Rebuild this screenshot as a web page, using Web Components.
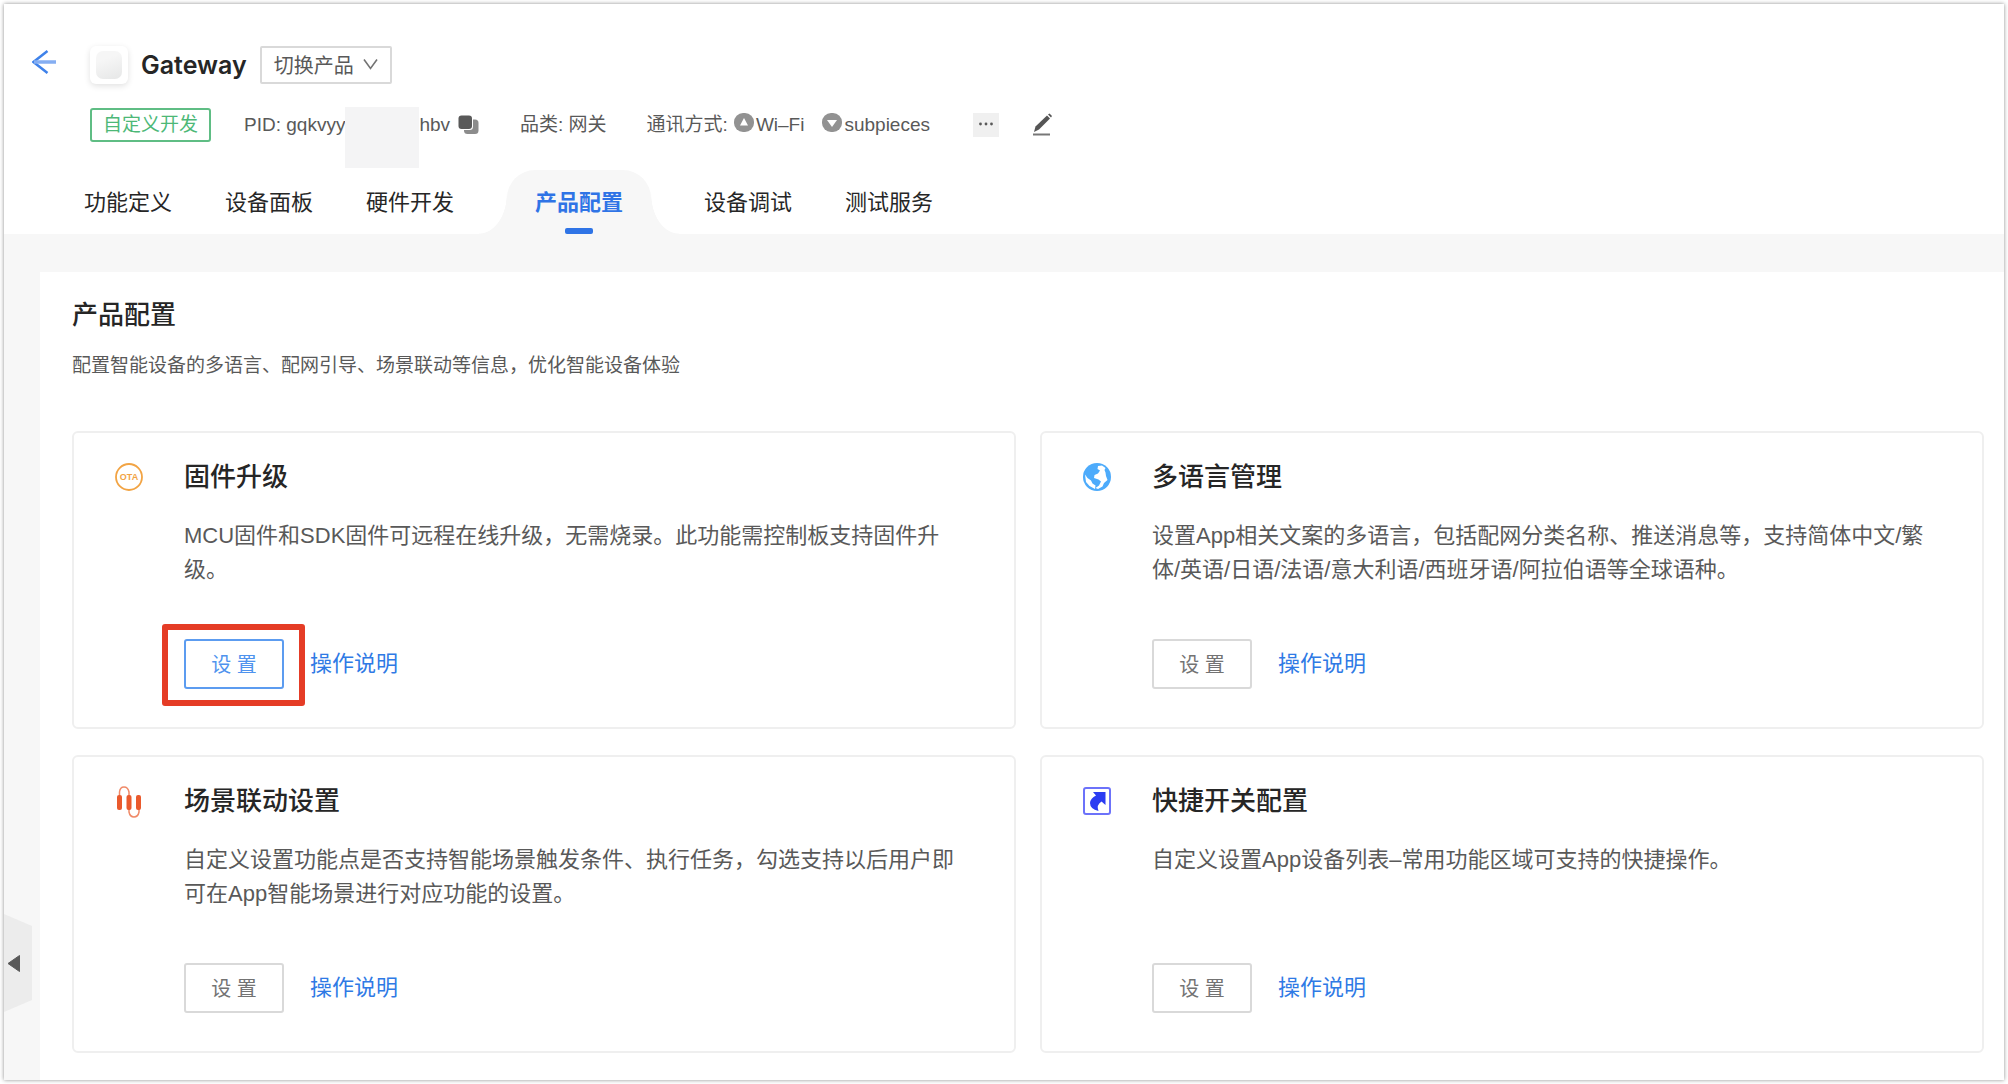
<!DOCTYPE html>
<html lang="zh-CN">
<head>
<meta charset="utf-8">
<title>Gateway - 产品配置</title>
<style>
  body {
    margin: 0;
    background: #fff;
    color: #262626;
    font-family: "Liberation Sans", "Noto Sans CJK SC", sans-serif;
  }
</style>
</head>
<body>
<product-console>
  <product-header slot="header" name="Gateway"></product-header>
  <config-panel heading="产品配置" summary="配置智能设备的多语言、配网引导、场景联动等信息，优化智能设备体验">
    <config-card heading="固件升级" icon="ota" active>MCU固件和SDK固件可远程在线升级，无需烧录。此功能需控制板支持固件升级。</config-card>
    <config-card heading="多语言管理" icon="globe">设置App相关文案的多语言，包括配网分类名称、推送消息等，支持简体中文/繁体/英语/日语/法语/意大利语/西班牙语/阿拉伯语等全球语种。</config-card>
    <config-card heading="场景联动设置" icon="scene">自定义设置功能点是否支持智能场景触发条件、执行任务，勾选支持以后用户即可在App智能场景进行对应功能的设置。</config-card>
    <config-card heading="快捷开关配置" icon="shortcut">自定义设置App设备列表–常用功能区域可支持的快捷操作。</config-card>
  </config-panel>
</product-console>

<script>
// product-console - page shell with the collapsed side menu handle
class ProductConsole extends HTMLElement {
  constructor() {
    super();
    this.attachShadow({ mode: 'open' });
  }

  connectedCallback() {
    this.shadowRoot.innerHTML = `
      <style>
        :host {
          display: flex;
          box-sizing: border-box;
          min-height: 100vh;
          padding: 4px;
        }

        .frame {
          position: relative;
          flex: 1;
          display: flex;
          flex-direction: column;
          background: #f7f7f7;
          box-shadow: 0 0 4px rgba(0, 0, 0, 0.45);
        }

        main {
          flex: 1;
          display: flex;
          padding: 38px 0 0 36px;
        }

        .handle {
          position: absolute;
          left: 0;
          bottom: 68px;
          width: 28px;
          height: 98px;
          padding: 0;
          border: 0;
          background: none;
          cursor: pointer;
        }

        .handle svg {
          display: block;
        }
      </style>

      <div class="frame">
        <slot name="header"></slot>
        <main><slot></slot></main>
        <button class="handle" aria-label="展开菜单">
          <svg width="28" height="98" viewBox="0 0 28 98">
            <path d="M0 0L28 12V86L0 98z" fill="#ececec"/>
            <path d="M4 49.500L15.500 41.500V57.500z" fill="#595959" stroke="#595959" stroke-linejoin="round"/>
          </svg>
        </button>
      </div>
    `;
  }
}

// product-header - product name, meta line and tabs
class ProductHeader extends HTMLElement {
  constructor() {
    super();
    this.attachShadow({ mode: 'open' });
  }

  connectedCallback() {
    this.shadowRoot.innerHTML = `
      <style>
        :host {
          display: block;
          padding-top: 42px;
          background: #fff;
        }

        button {
          padding: 0;
          border: 0;
          background: none;
          font-family: inherit;
          cursor: pointer;
        }

        svg {
          display: block;
        }

        .top {
          display: flex;
          gap: 34px;
          padding-left: 28px;
        }

        .back {
          align-self: flex-start;
          height: 32px;
        }

        .title-row {
          display: flex;
          align-items: center;
          height: 38px;
        }

        .logo {
          display: flex;
          align-items: center;
          justify-content: center;
          width: 38px;
          height: 38px;
          border-radius: 6px;
          background: #fff;
          box-shadow: 0 2px 6px rgba(0, 0, 0, 0.12);
        }

        .logo span {
          width: 26px;
          height: 28px;
          border-radius: 7px;
          background: linear-gradient(160deg, #f6f6f6 30%, #e6e7e7);
        }

        h1 {
          margin: 0 13px;
          font-family: Inter, "Liberation Sans", sans-serif;
          font-size: 25px;
          font-weight: 600;
          line-height: 38px;
        }

        .switch {
          display: flex;
          align-items: center;
          gap: 9px;
          height: 38px;
          padding: 0 12px 2px;
          border: 2px solid #d9d9d9;
          border-radius: 2px;
          color: #595959;
          font-size: 20px;
        }

        .meta {
          display: flex;
          align-items: center;
          height: 34px;
          margin-top: 24px;
          color: #595959;
          font-size: 19px;
          line-height: 28px;
          white-space: nowrap;
        }

        .tag {
          box-sizing: border-box;
          height: 34px;
          margin-right: 33px;
          padding: 0 11px;
          border: 2px solid #5fbd84;
          border-radius: 3px;
          color: #4db877;
          line-height: 30px;
        }

        .pid,
        .link {
          display: flex;
          align-items: center;
        }

        .mask {
          width: 74px;
          height: 61px;
          margin: -2px 0 -27px;
          background: #f4f4f5;
        }

        .copy {
          margin-left: 8px;
        }

        .kind,
        .link {
          margin-left: 40px;
        }

        .link svg {
          margin: 0 2px 4px 6px;
        }

        .link svg + span + svg {
          margin-left: 18px;
        }

        .more {
          width: 26px;
          height: 24px;
          margin: 0 34px 0 43px;
          background: #f0f0f0;
        }

        nav {
          display: flex;
          gap: 53px;
          margin-top: 28px;
          padding-left: 80px;
        }

        nav a {
          position: relative;
          height: 64px;
          color: #262626;
          font-size: 22px;
          line-height: 66px;
          text-decoration: none;
        }

        nav a.current {
          display: flex;
          flex-direction: column;
          align-items: center;
          padding: 0 28px;
          border-radius: 28px 28px 0 0;
          background: #f7f7f7;
          color: #2f74e6;
          font-weight: 700;
        }

        nav a.current i {
          width: 28px;
          height: 6px;
          margin-top: -8px;
          border-radius: 2px;
          background: #2f74e6;
        }

        /* concave feet that join the tab to the grey page */
        nav a.current::before,
        nav a.current::after {
          content: "";
          position: absolute;
          bottom: 0;
          width: 28px;
          height: 40px;
        }

        nav a.current::before {
          right: 100%;
          background: radial-gradient(ellipse 28px 40px at 0 0, transparent 98%, #f7f7f7 100%);
        }

        nav a.current::after {
          left: 100%;
          background: radial-gradient(ellipse 28px 40px at 100% 0, transparent 98%, #f7f7f7 100%);
        }
      </style>

      <div class="top">
        <button class="back" aria-label="返回">
          <svg width="24" height="24" viewBox="0 0 24 24" fill="none" stroke="#3f82ea" stroke-width="2.500">
            <path d="M15.500 1L1.500 12L15.500 23"/>
            <path d="M2 12H24" stroke="#85aef2" stroke-width="3.500"/>
          </svg>
        </button>
        <div>
          <div class="title-row">
            <div class="logo"><span></span></div>
            <h1>${this.getAttribute('name')}</h1>
            <button class="switch">
              <span>切换产品</span>
              <svg width="15" height="12" viewBox="0 0 15 12" fill="none" stroke="#737373" stroke-width="1.600"><path d="M1 1.500L7.500 10.500L14 1.500"/></svg>
            </button>
          </div>
          <div class="meta">
            <span class="tag">自定义开发</span>
            <div class="pid">
              <span>PID: gqkvyy</span><span class="mask"></span><span>hbv</span>
              <button class="copy" aria-label="复制">
                <svg width="22" height="20" viewBox="0 0 22 20">
                  <rect x="6" y="4.500" width="14.500" height="14.500" rx="3.500" fill="#8c8c8c"/>
                  <rect x="0" y="0" width="15" height="15" rx="3.500" fill="#fff"/>
                  <rect x="0.500" y="0.500" width="13.500" height="13.500" rx="3" fill="#595959"/>
                </svg>
              </button>
            </div>
            <span class="kind">品类: 网关</span>
            <div class="link">
              <span>通讯方式:</span>
              <svg width="20" height="20" viewBox="0 0 20 20"><rect width="20" height="19" rx="9" fill="#929292"/><path d="M10 5L14 12.500H6z" fill="#fff"/></svg>
              <span>Wi–Fi</span>
              <svg width="20" height="20" viewBox="0 0 20 20"><rect width="20" height="19" rx="9" fill="#929292"/><path d="M5 7H15L10 14z" fill="#fff"/></svg>
              <span>subpieces</span>
            </div>
            <button class="more" aria-label="更多">
              <svg width="26" height="24" viewBox="0 0 26 24" fill="#595959"><circle cx="7.500" cy="11" r="1.400"/><circle cx="13" cy="11" r="1.400"/><circle cx="18.500" cy="11" r="1.400"/></svg>
            </button>
            <button aria-label="编辑">
              <svg width="20" height="24" viewBox="0 0 20 24">
                <path d="M0 21.500H17" stroke="#777" stroke-width="2"/>
                <path d="M1 19L2.500 13.500L14 2.500L17 5.500L6 16.500z" fill="#555"/>
                <path d="M15 1.500L16.500 0.500L19 3L18 4.500z" fill="#555"/>
              </svg>
            </button>
          </div>
        </div>
      </div>
      <nav>
        <a href="#function">功能定义</a>
        <a href="#panel">设备面板</a>
        <a href="#hardware">硬件开发</a>
        <a href="#config" class="current">产品配置<i></i></a>
        <a href="#debug">设备调试</a>
        <a href="#test">测试服务</a>
      </nav>
    `;
  }
}

// config-panel - heading and a two column grid of cards
class ConfigPanel extends HTMLElement {
  constructor() {
    super();
    this.attachShadow({ mode: 'open' });
  }

  connectedCallback() {
    this.shadowRoot.innerHTML = `
      <style>
        :host {
          flex: 1;
          display: block;
          padding: 25px 20px 26px 32px;
          background: #fff;
        }

        h2 {
          margin: 0;
          font-size: 26px;
          font-weight: 500;
          line-height: 36px;
        }

        p {
          margin: 19px 0 51px;
          color: #595959;
          font-size: 19px;
          line-height: 28px;
        }

        .grid {
          display: grid;
          grid-template-columns: 1fr 1fr;
          gap: 26px 24px;
        }
      </style>

      <h2>${this.getAttribute('heading')}</h2>
      <p>${this.getAttribute('summary')}</p>
      <div class="grid"><slot></slot></div>
    `;
  }
}

const ICONS = {
  ota: `
    <circle cx="14" cy="14" r="13" fill="none" stroke="#f2a444" stroke-width="1.800"/>
    <text x="14" y="17" text-anchor="middle" font-size="9" font-weight="700" fill="#f2a444">OTA</text>`,
  globe: `
    <circle cx="14" cy="14" r="14" fill="#4dabfb"/>
    <path fill="#fff" d="M15 3L19 2.500L22.500 5L21.500 7L22.500 9.500L23 13L24.500 17L21 20L19.500 23.500L15 26L12.500 25L16 22.500L18 18.500L15.500 16.500L11 15L11.500 12L15 10.500L17 7.500L14.500 6z"/>
    <path fill="#fff" d="M2 11.500L4.500 15L8 17.500L9.500 20.500L12.500 22.500L12 26L6.500 23L3 19z"/>`,
  scene: `
    <g fill="none" stroke="#f08a68" stroke-width="1.500">
      <path d="M4.500 8V5Q5 0 9 0T14 5V8"/>
      <path d="M14 22V25Q15 30 19 30T24 25V22"/>
    </g>
    <g fill="#ea5a2d">
      <rect x="2" y="8" width="5" height="15" rx="2"/>
      <rect x="11.500" y="8" width="5" height="15" rx="2"/>
      <rect x="21" y="8" width="5" height="15" rx="2"/>
    </g>`,
  shortcut: `
    <rect x="1" y="1" width="26" height="26" rx="2" fill="#fff" stroke="#6c72fa" stroke-width="2"/>
    <path fill="#2b3cf2" d="M10 5H22.500V18L18.500 14.500Q13 18 15.500 24Q7 22 7 16Q7.500 11 13 8.500z"/>`
};

// config-card - one feature with its settings button and help link
class ConfigCard extends HTMLElement {
  constructor() {
    super();
    this.attachShadow({ mode: 'open' });
  }

  connectedCallback() {
    this.shadowRoot.innerHTML = `
      <style>
        :host {
          display: grid;
          grid-template-columns: 28px 1fr;
          column-gap: 41px;
          padding: 30px 48px 38px 41px;
          border: 2px solid #efefef;
          border-radius: 6px;
        }

        svg {
          display: block;
          overflow: visible;
        }

        h3 {
          margin: 0;
          font-size: 26px;
          font-weight: 500;
          line-height: 28px;
        }

        p {
          min-height: 68px;
          margin: 28px 0 52px;
          color: #595959;
          font-size: 22px;
          line-height: 34px;
        }

        .actions {
          display: flex;
          align-items: center;
          gap: 26px;
        }

        .set {
          position: relative;
        }

        button {
          display: block;
          width: 100px;
          height: 50px;
          padding: 0 0 2px;
          border: 2px solid #d9d9d9;
          border-radius: 3px;
          background: #fff;
          color: #737373;
          font-family: inherit;
          font-size: 20px;
          cursor: pointer;
        }

        :host([active]) button {
          border-color: #5c9cf0;
          color: #4f93ee;
        }

        /* callout drawn round the highlighted button */
        :host([active]) .set::after {
          content: "";
          position: absolute;
          inset: -15px -21px -17px -22px;
          border: 6px solid #e53c26;
          border-radius: 3px;
          pointer-events: none;
        }

        a {
          color: #2f7ae5;
          font-size: 22px;
          line-height: 34px;
          text-decoration: none;
        }
      </style>

      <svg width="28" height="28" viewBox="0 0 28 28" aria-hidden="true">${ICONS[this.getAttribute('icon')]}</svg>
      <div>
        <h3>${this.getAttribute('heading')}</h3>
        <p><slot></slot></p>
        <div class="actions">
          <div class="set"><button>设 置</button></div>
          <a href="#help">操作说明</a>
        </div>
      </div>
    `;
  }
}

customElements.define('product-console', ProductConsole);
customElements.define('product-header', ProductHeader);
customElements.define('config-panel', ConfigPanel);
customElements.define('config-card', ConfigCard);
</script>
</body>
</html>
